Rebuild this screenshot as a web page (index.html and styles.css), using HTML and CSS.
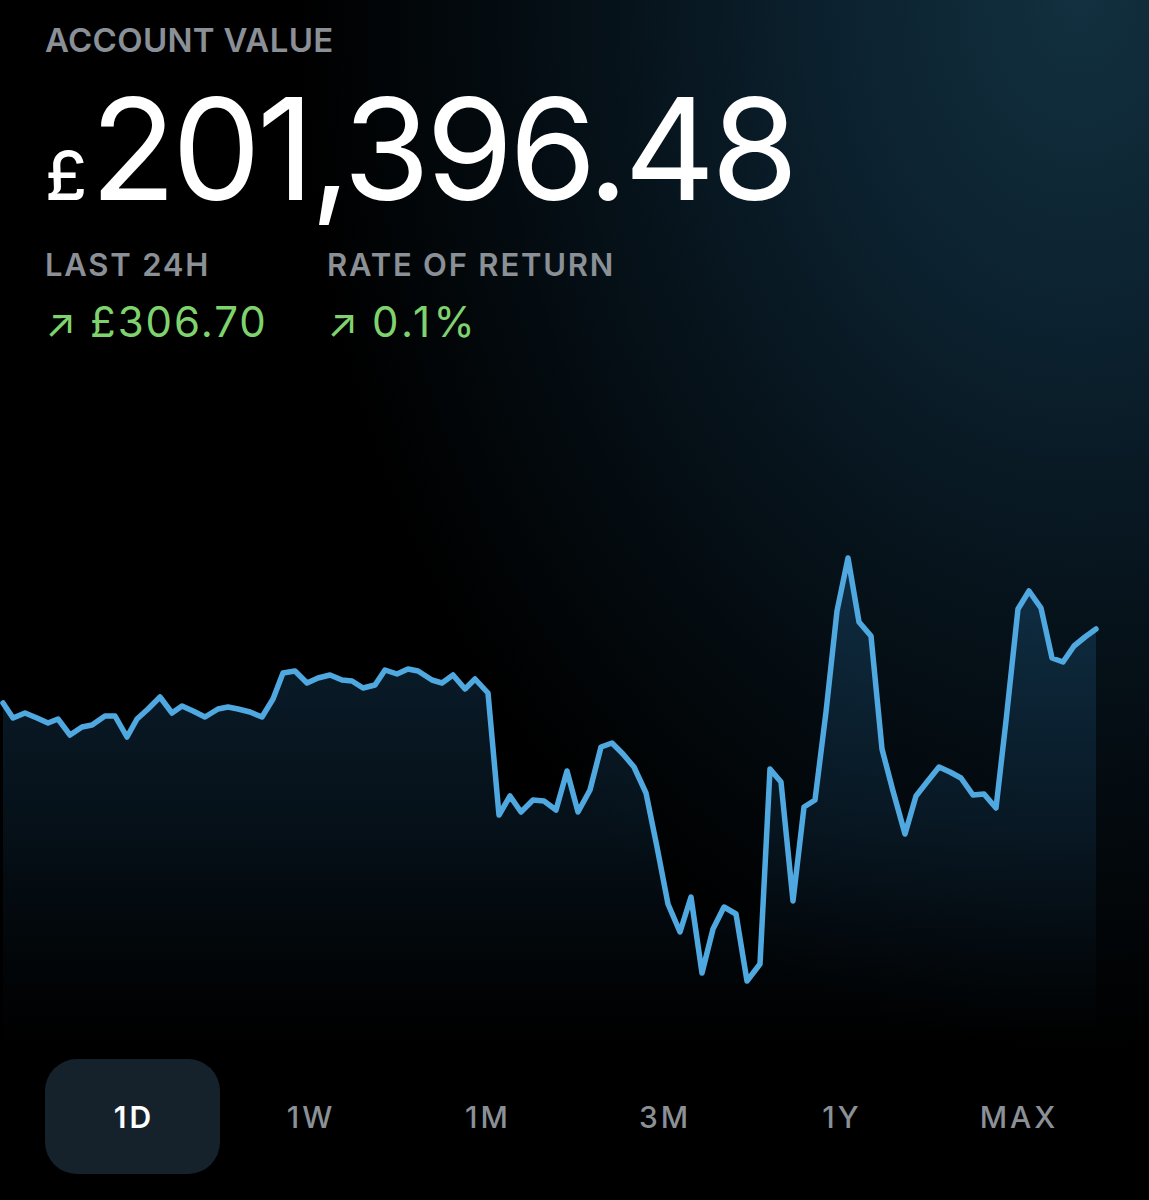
FILE: index.html
```html
<!DOCTYPE html>
<html lang="en">
<head>
<meta charset="utf-8">
<title>Account value</title>
<link rel="stylesheet" href="styles.css">
</head>
<body>
<main class="screen">
  <section class="summary">
    <div class="label">ACCOUNT VALUE</div>
    <div class="value"><span class="currency">£</span>201,396.48</div>
    <div class="stats">
      <div class="stat">
        <div class="stat-label">LAST 24H</div>
        <div class="stat-value"><span class="arrow">↗</span>£306.70</div>
      </div>
      <div class="stat">
        <div class="stat-label">RATE OF RETURN</div>
        <div class="stat-value"><span class="arrow">↗</span>0.1%</div>
      </div>
    </div>
  </section>

  <svg class="chart" width="1149" height="716" viewBox="0 344 1149 716" aria-hidden="true">
    <defs>
      <linearGradient id="fill" gradientUnits="userSpaceOnUse" x1="0" y1="560" x2="0" y2="1045">
        <stop offset="0" stop-color="#1e5a86" stop-opacity="0.38"/>
        <stop offset="0.55" stop-color="#1a4c72" stop-opacity="0.22"/>
        <stop offset="1" stop-color="#143a58" stop-opacity="0"/>
      </linearGradient>
    </defs>
    <path class="area" fill="url(#fill)" d="M3,704 L13,719 L25,714 L37,719 L48,724 L58,720 L70,736 L82,728 L92,726 L105,717 L115,717 L127,738 L137,720 L148,710 L160,698 L172,714 L182,707 L193,712 L205,718 L218,710 L228,708 L238,710 L250,713 L262,718 L273,700 L283,674 L295,672 L307,684 L318,679 L330,676 L342,681 L352,682 L363,689 L375,686 L385,671 L397,675 L408,670 L418,672 L432,681 L442,684 L453,676 L465,690 L475,680 L488,694 L499,816 L510,797 L521,813 L533,801 L544,802 L556,811 L567,772 L578,813 L590,791 L601,748 L612,744 L623,755 L634,768 L646,794 L657,848 L668,905 L680,933 L691,898 L702,974 L713,930 L724,908 L736,915 L747,982 L760,965 L770,770 L781,783 L793,902 L804,808 L815,801 L826,713 L837,612 L848,559 L859,623 L871,637 L882,750 L893,792 L905,835 L916,797 L927,783 L939,768 L950,773 L961,779 L973,796 L984,795 L996,809 L1006,722 L1018,610 L1029,592 L1041,609 L1052,659 L1063,663 L1074,647 L1085,638 L1096,630 L1096,1045 L3,1045 Z"/>
    <path class="line" d="M3,704 L13,719 L25,714 L37,719 L48,724 L58,720 L70,736 L82,728 L92,726 L105,717 L115,717 L127,738 L137,720 L148,710 L160,698 L172,714 L182,707 L193,712 L205,718 L218,710 L228,708 L238,710 L250,713 L262,718 L273,700 L283,674 L295,672 L307,684 L318,679 L330,676 L342,681 L352,682 L363,689 L375,686 L385,671 L397,675 L408,670 L418,672 L432,681 L442,684 L453,676 L465,690 L475,680 L488,694 L499,816 L510,797 L521,813 L533,801 L544,802 L556,811 L567,772 L578,813 L590,791 L601,748 L612,744 L623,755 L634,768 L646,794 L657,848 L668,905 L680,933 L691,898 L702,974 L713,930 L724,908 L736,915 L747,982 L760,965 L770,770 L781,783 L793,902 L804,808 L815,801 L826,713 L837,612 L848,559 L859,623 L871,637 L882,750 L893,792 L905,835 L916,797 L927,783 L939,768 L950,773 L961,779 L973,796 L984,795 L996,809 L1006,722 L1018,610 L1029,592 L1041,609 L1052,659 L1063,663 L1074,647 L1085,638 L1096,630"/>
  </svg>

  <nav class="ranges">
    <button class="range active">1D</button>
    <button class="range">1W</button>
    <button class="range">1M</button>
    <button class="range">3M</button>
    <button class="range">1Y</button>
    <button class="range">MAX</button>
  </nav>
</main>
</body>
</html>
```

FILE: styles.css
```css
* {
  box-sizing: border-box;
}

html, body {
  margin: 0;
  padding: 0;
  background: #000;
}

body {
  font-family: Inter, "Liberation Sans", sans-serif;
  color: #fff;
}

.screen {
  width: 1149px;
  height: 1200px;
  overflow: hidden;
  background:
    radial-gradient(ellipse 780px 1050px at 1080px 0px, #12303f 0%, #0c2230 30%, #06121a 60%, rgba(0,0,0,0) 100%),
    #000;
}

.summary {
  padding: 24px 0 0 45px;
}

.label {
  font-size: 33px;
  line-height: 1;
  font-weight: 600;
  color: #8a9096;
  letter-spacing: 0.3px;
}

.value {
  margin-top: 21px;
  font-size: 141px;
  line-height: 1;
  font-weight: 400;
  letter-spacing: -4.1px;
  display: flex;
  align-items: baseline;
}

.currency {
  font-size: 68px;
  font-weight: 500;
  letter-spacing: 0;
  margin-right: 3px;
}

.stats {
  margin-top: 30px;
  display: grid;
  grid-template-columns: 282px auto;
}

.stat-label {
  font-size: 31px;
  line-height: 1;
  font-weight: 600;
  color: #8a9096;
  letter-spacing: 1.8px;
}

.stat-value {
  margin-top: 21px;
  font-size: 42px;
  line-height: 1;
  font-weight: 400;
  letter-spacing: 2px;
  color: #7fd36e;
  display: flex;
  align-items: baseline;
}

.stat + .stat .stat-value {
  letter-spacing: 3.5px;
}

.arrow {
  font-size: 40px;
  font-weight: 400;
  letter-spacing: 0;
  margin-right: 14px;
}

.chart {
  display: block;
}

.line {
  fill: none;
  stroke: #4fa9e0;
  stroke-width: 5.5;
  stroke-linejoin: round;
  stroke-linecap: round;
}

.ranges {
  padding-left: 45px;
  display: grid;
  grid-template-columns: repeat(6, 175px);
  column-gap: 2px;
}

.range {
  height: 115px;
  border: 0;
  border-radius: 32px;
  background: transparent;
  font-family: Inter, "Liberation Sans", sans-serif;
  font-size: 30px;
  font-weight: 500;
  letter-spacing: 3px;
  color: #8a9096;
  padding: 0 0 0 3px;
}

.range.active {
  background: #16222b;
  color: #fff;
  font-weight: 600;
}
```
